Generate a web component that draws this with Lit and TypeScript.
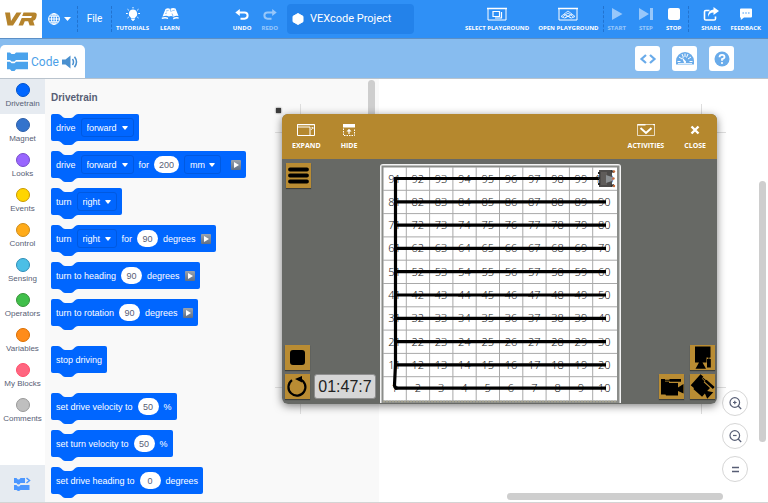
import { LitElement, html, svg, css } from "lit";
import { customElement } from "lit/decorators.js";

type Part =
  | { kind: "text"; value: string }
  | { kind: "menu"; value: string; label: string }
  | { kind: "num"; value: string; label: string }
  | { kind: "play" };

const t = (value: string): Part => ({ kind: "text", value });
const m = (value: string, label: string): Part => ({ kind: "menu", value, label });
const n = (value: string, label: string): Part => ({ kind: "num", value, label });
const play: Part = { kind: "play" };

const groups: Part[][][] = [
  [
    [t("drive"), m("forward", "Direction")],
    [t("drive"), m("forward", "Direction"), t("for"), n("200", "Distance"), m("mm", "Unit"), play],
    [t("turn"), m("right", "Turn direction")],
    [t("turn"), m("right", "Turn direction"), t("for"), n("90", "Angle"), t("degrees"), play],
    [t("turn to heading"), n("90", "Heading"), t("degrees"), play],
    [t("turn to rotation"), n("90", "Rotation"), t("degrees"), play],
  ],
  [[t("stop driving")]],
  [
    [t("set drive velocity to"), n("50", "Drive velocity"), t("%")],
    [t("set turn velocity to"), n("50", "Turn velocity"), t("%")],
    [t("set drive heading to"), n("0", "Drive heading"), t("degrees")],
  ],
];

const categories = [
  ["Drivetrain", "#0066ff", "#0052cc"],
  ["Magnet", "#3373cc", "#2e5fa8"],
  ["Looks", "#9966ff", "#774dcb"],
  ["Events", "#ffd500", "#cc9900"],
  ["Control", "#ffab19", "#cf8b17"],
  ["Sensing", "#4cbfe6", "#2e8eb8"],
  ["Operators", "#40bf4a", "#389438"],
  ["Variables", "#ff8c1a", "#db6e00"],
  ["My Blocks", "#ff6680", "#ff4d6a"],
  ["Comments", "#bfbfbf", "#999999"],
];

const icons = {
  bulb: html`<svg viewBox="0 0 16 14" width="16" height="14"><g fill="#fff"><path d="M8 2.500a4.300 4.300 0 0 0-2.200 7.900V11h4.400v-.6A4.300 4.300 0 0 0 8 2.500zM6 11.500h4v1.200H6zM7 12.800h2v1H7z"/></g><path d="M8 0v1.400M2.500 2.200l1.300 1.100M13.500 2.200l-1.300 1.100M1 6.500h1.800M15 6.500h-1.800M2.500 11l1.200-.9M13.500 11l-1.200-.9" stroke="#fff" stroke-width="1" fill="none"/></svg>`,
  learn: html`<svg viewBox="0 0 18 14" width="18" height="14"><path d="M4.500 2q2.500-1.300 4.700 0 2.300-1.500 5.300-.5L17.500 9q-2.500-1-5 .8-2.200-1.600-4.700-.3Q5.500 8 1.500 9.500z" fill="#fff"/><path d="M9.200 2l1 3M11 6.500l1 2.500" stroke="#2f8ff5" stroke-width=".6"/><path d="M.8 10.500q3.500-1.200 6 0l.4 1.500q-3-1-6.400 0zM12 11q2.500-1.600 5.600-.7v1.500q-2.600-.8-5.200.6z" fill="#fff"/><path d="M5 4l2.600-.6M11.200 3.700l2.600-.5M4 6.500l2-.5" stroke="#2f8ff5" stroke-width=".5"/></svg>`,
  undo: html`<svg viewBox="0 0 14 12" width="14" height="12"><path d="M3.500 3.500h6a3 3 0 0 1 0 6.200H5.500" fill="none" stroke="#fff" stroke-width="2"/><path d="M4.800 0v7L.3 3.500z" fill="#fff"/></svg>`,
  redo: html`<svg viewBox="0 0 14 12" width="14" height="12"><path d="M10.500 3.500h-6a3 3 0 0 0 0 6.200H8.500" fill="none" stroke="#fff" stroke-width="2"/><path d="M9.200 0v7l4.500-3.500z" fill="#fff"/></svg>`,
  select: html`<svg viewBox="0 0 20 14" width="20" height="14" fill="none" stroke="#fff"><path d="M1 1.500h18v11.500H1z"/><path d="M0 1.500h20" stroke-width="1.500"/><path d="M6 4.500h6.500v5H6z" stroke-width="1.200"/><path d="M14.500 5v6H8" stroke-width="1.200"/></svg>`,
  open: html`<svg viewBox="0 0 20 14" width="20" height="14" fill="none" stroke="#fff"><path d="M1 1.500h18v11.500H1z"/><path d="M0 1.500h20" stroke-width="1.500"/><path d="M3 9.500L10 4l7 5.500-3.500 1.500L10 9 6.500 11zM6 7l7 4M14 7l-7 4M4.500 10l5.500-4 5.500 4" stroke-width=".8"/></svg>`,
  start: html`<svg viewBox="0 0 12 14" width="12" height="14"><path d="M1 1l10.500 6L1 13z" fill="#fff"/></svg>`,
  step: html`<svg viewBox="0 0 16 14" width="16" height="14"><path d="M1 1l10 6-10 6zM12 1h3v12h-3z" fill="#fff"/></svg>`,
  stop: html`<svg viewBox="0 0 14 14" width="14" height="14"><rect x="1" y="1" width="12" height="12" rx="2" fill="#fff"/></svg>`,
  share: html`<svg viewBox="0 0 16 14" width="16" height="14"><path d="M6.500 3.500H2.800a1.300 1.300 0 0 0-1.300 1.300v6.900a1.300 1.300 0 0 0 1.300 1.300h8.400a1.300 1.300 0 0 0 1.300-1.300V9.500" fill="none" stroke="#fff" stroke-width="1.600"/><path d="M10.500 0L16 4l-5.500 4V5.600Q6.500 5.600 5 10 4.500 3 10.500 2.500z" fill="#fff"/></svg>`,
  feedback: html`<svg viewBox="0 0 14 14" width="14" height="14"><path d="M1 2.500a1 1 0 0 1 1-1h10a1 1 0 0 1 1 1v7a1 1 0 0 1-1 1H5l-3.200 2.500V10.500H1z" fill="#fff"/><path d="M3.500 6h1.400M6.300 6h1.400M9.100 6h1.400" stroke="#2f8ff5" stroke-width="1.200"/></svg>`,
};

const glyph = {
  expand: html`<svg viewBox="0 0 18 12" width="18" height="12" fill="none" stroke="#fff"><path d="M.5.5h17v11H.5z"/><path d="M.5 3h12.500v8.500" /><path d="M.5.5h17" stroke-width="1.500"/><path d="M14 6l2-2.500M14.500 3.500h1.500V5" stroke-width=".8"/></svg>`,
  hide: html`<svg viewBox="0 0 14 12" width="14" height="12"><path d="M1 0h12v3.500H1z" fill="#fff"/><path d="M1.500 4.500v7h11v-7" fill="none" stroke="#fff" stroke-dasharray="1.500 1"/><path d="M7 4.800l2.500 2.700H7.600V10H6.400V7.500H4.500z" fill="#fff"/></svg>`,
  activities: html`<svg viewBox="0 0 18 12" width="18" height="12" fill="none" stroke="#fff"><path d="M.5.5h17v11H.5z" stroke-width=".7"/><path d="M.5.7h8M16 .5h2" stroke-width="1.400"/><path d="M3.500 4l5.500 5 5.500-5" stroke-width="2"/></svg>`,
  close: html`<svg viewBox="0 0 12 12" width="12" height="12"><path d="M2.500 2.500l7 7M9.500 2.500l-7 7" stroke="#fff" stroke-width="2.400"/></svg>`,
};

const sideCamera = svg`<path d="M2 5h4v2.500h4V9h9v4.500l5.500-3.500v9.500L19 17v4.500H7l-.5-1H2z"></path><path d="M10.500 5H22v2.800H10.500zM6 5.800h5v1H6z"></path>`;
const topCamera = svg`<path d="M5 1.500h15.500v11h-4v5h-4l3.500 6.200H5.500L9 17.500H5z"></path><path d="M17 14h3.800v8.500H17zM18.400 11.500h1V15h-1z"></path>`;

const CELL = 23.3;

function board() {
  const ks = Array.from({ length: 11 }, (_, i) => i);
  const rows = ks.slice(0, 10);
  return html`<svg class="board" viewBox="0 0 241 239" width="241" height="239" role="img" aria-label="Number grid playground">
    <rect x="0" y="0" width="241" height="250" rx="3" fill="#f4f4f4"></rect>
    <rect x="1.500" y="1.500" width="238" height="250" fill="#8b8d8a"></rect>
    <rect x="3.500" y="3.500" width="233.500" height="233" fill="#fff"></rect>
    <path d="M3 237.500H237" stroke="#a5a28f" stroke-width="1.500" stroke-dasharray="2 1"></path>
    ${ks.slice(1, 10).map(
      (k) => svg`<path d="M${3 + k * CELL} 3V237M3 ${3 + k * CELL}H237" stroke="#a9a9a9" stroke-width="1"></path>`
    )}
    <g class="cells">
      ${rows.map((r) =>
        rows.map(
          (c) => svg`<text x=${14.5 + c * CELL} y=${18.5 + r * CELL} text-anchor="middle">${(9 - r) * 10 + c + 1}</text>`
        )
      )}
    </g>
    <g stroke="#000" stroke-width="3.200" fill="none" stroke-linejoin="round">
      ${rows.map((r) => svg`<path d="M15 ${14.5 + r * CELL}H226"></path>`)}
      <path d="M15.500 13V200L14.500 221q0 3 3 3.200"></path>
    </g>
    <g>
      <rect x="219" y="6" width="13" height="17" fill="#4d4b4a"></rect>
      <rect x="221" y="8" width="6" height="13" fill="#5f5c5a"></rect>
      <path d="M226 11l6 2v4l-6 2z" fill="#8d9194"></path>
      <path d="M219 8v2M219 13v2M219 19v2" stroke="#222" stroke-width="2"></path>
      <path d="M231 7l3 1M231 22l3-1" stroke="#333" stroke-width="2"></path>
      <circle cx="234" cy="7.500" r="1.200" fill="#c46a3a"></circle>
      <circle cx="233.500" cy="14.500" r="1.200" fill="#c46a3a"></circle>
      <circle cx="234" cy="22" r="1.200" fill="#c46a3a"></circle>
    </g>
  </svg>`;
}

@customElement("code-block")
class CodeBlock extends LitElement {
  static properties = { parts: { attribute: false } };
  declare parts: Part[];

  static styles = css`
    :host { display: block; height: 27px; }
    .block {
      position: relative;
      display: inline-flex;
      align-items: center;
      gap: 5px;
      height: 27px;
      padding: 0 5px;
      box-sizing: border-box;
      border-radius: 2px;
      background: #0066ff;
      color: #fff;
      font: 500 9px/12px "Liberation Sans", Arial, sans-serif;
      white-space: pre;
    }
    .notch, .bump { position: absolute; left: 7px; }
    .notch { top: 0; fill: #f9f9f9; }
    .bump { top: 100%; fill: #0066ff; }
    .menu { position: relative; display: flex; align-items: center; }
    select {
      appearance: none;
      height: 19px;
      margin: 0;
      padding: 0 15px 0 5px;
      border: 1px solid #0059e0;
      border-radius: 3px;
      background: transparent;
      color: #fff;
      font: inherit;
    }
    .caret { position: absolute; right: 6px; pointer-events: none; }
    input {
      field-sizing: content;
      min-width: 21px;
      height: 17px;
      box-sizing: border-box;
      margin: 0;
      padding: 0 5px;
      border: 0;
      border-radius: 9px;
      background: #fff;
      color: #575e75;
      font: inherit;
      text-align: center;
    }
    .play {
      display: flex;
      width: 10px;
      height: 10px;
      padding: 0;
      border: 0;
      border-radius: 1px;
      background: linear-gradient(#9ba3ad, #5f6f86);
    }
    .menu + .play { margin-left: 5px; }
  `;

  render() {
    return html`<div class="block">
      <svg class="notch" viewBox="0 0 20 4" width="20" height="4"><path d="M0 0Q2 0 3.500 1.800L5 3.200Q6 4 7 4h6q1 0 2-.8l1.500-1.400Q18 0 20 0z" /></svg>
      ${this.parts.map((p) => {
        if (p.kind === "text") return html`<span>${p.value}</span>`;
        if (p.kind === "num") return html`<input type="text" aria-label=${p.label} .value=${p.value} />`;
        if (p.kind === "menu")
          return html`<span class="menu"
            ><select aria-label=${p.label}><option>${p.value}</option></select
            ><svg class="caret" viewBox="0 0 6 4" width="6" height="4"><path d="M.5 0h5q.5.3 0 1L3.500 3.500q-.5.5-1 0L.5 1Q0 .3.500 0z" fill="#fff" /></svg></span>`;
        return html`<button class="play" aria-label="Show more"><svg viewBox="0 0 10 10" width="10" height="10"><path d="M3 2l5 3-5 3z" fill="#fff" /></svg></button>`;
      })}
      <svg class="bump" viewBox="0 0 20 4" width="20" height="4"><path d="M0 0Q2 0 3.500 1.800L5 3.200Q6 4 7 4h6q1 0 2-.8l1.500-1.400Q18 0 20 0z" /></svg>
    </div>`;
  }
}

@customElement("app-root")
class AppRoot extends LitElement {
  static styles = css`
    :host {
      display: flex;
      flex-direction: column;
      position: relative;
      height: 100vh;
      overflow: hidden;
      box-sizing: border-box;
      border-bottom: 1px solid #d4d4d4;
      background: #fff;
      font-family: "Liberation Sans", Arial, sans-serif;
    }
    svg { display: block; flex: none; }
    button { margin: 0; padding: 0; border: 0; background: none; color: inherit; font: inherit; }

    .top {
      display: flex;
      align-items: stretch;
      flex: none;
      height: 38px;
      border-bottom: 1px solid #5b8fc6;
      background: #2f90f6;
      color: #fff;
    }
    .logo { display: flex; align-items: center; justify-content: center; width: 42px; background: #fff; }
    .lang { display: flex; align-items: center; gap: 4px; padding-left: 6px; width: 35px; box-sizing: border-box; }
    .file { width: 33px; font: 10px/14px Roboto, sans-serif; }
    .sep { flex: none; width: 0; margin: 6px 0; border-left: 1px dashed #2273d0; }
    .tools { display: flex; gap: 11px; padding-left: 4px; }
    .history { display: flex; gap: 10px; padding: 0 9px 0 53px; }
    .tool {
      display: flex;
      flex-direction: column;
      align-items: center;
      justify-content: flex-end;
      gap: 3px;
      padding-bottom: 6px;
      font: 700 6px/8px "Open Sans", sans-serif;
      white-space: nowrap;
    }
    .tool svg { margin: auto 0 0; }
    .off { opacity: 0.5; }
    .project {
      display: flex;
      align-items: center;
      gap: 6px;
      width: 127px;
      height: 30px;
      box-sizing: border-box;
      margin-top: 4px;
      padding: 0 5px;
      border-radius: 4px;
      background: #2382ea;
    }
    .project input {
      flex: 1;
      min-width: 0;
      padding: 0;
      border: 0;
      background: none;
      color: #fff;
      font: 11px/16px Roboto, sans-serif;
    }
    .right { display: flex; margin-left: auto; padding-right: 7px; }
    .right > div { display: flex; }
    .grounds { gap: 9px; padding-right: 4px; }
    .run { gap: 12px; padding: 0 7px 0 4px; }
    .social { gap: 10px; padding-left: 12px; }

    .bar {
      display: flex;
      align-items: flex-end;
      flex: none;
      height: 39px;
      border-bottom: 1px solid #b9c3cd;
      background: #87bcef;
    }
    .tab {
      display: flex;
      align-items: center;
      gap: 3px;
      width: 85px;
      height: 33px;
      box-sizing: border-box;
      padding-left: 7px;
      border-radius: 5px 5px 0 0;
      background: #fff;
      color: #4c9fe8;
      font: 12px/16px Roboto, sans-serif;
    }
    .views { display: flex; gap: 12px; margin: 0 34px 7px auto; }
    .view { display: flex; align-items: center; justify-content: center; width: 25px; height: 25px; border-radius: 3px; background: #fff; }

    .main { display: flex; flex: 1; min-height: 0; }
    .side { display: flex; flex-direction: column; flex: none; width: 45px; background: #fff; }
    .cats { flex: 1; margin: 0; padding: 0; list-style: none; }
    .cat {
      display: flex;
      flex-direction: column;
      align-items: center;
      gap: 1px;
      width: 45px;
      height: 35px;
      padding-top: 4px;
      color: #575e75;
      font: 8px/12px "Liberation Sans", Arial, sans-serif;
      white-space: nowrap;
    }
    .cat.on { background: #e6ebf1; }
    .dot { flex: none; width: 14px; height: 14px; box-sizing: border-box; border: 1px solid; border-radius: 50%; }
    .ext { display: flex; align-items: center; justify-content: center; height: 37px; background: #e6ebf1; }

    .flyout { position: relative; flex: none; width: 334px; box-sizing: border-box; padding: 12px 0 0 6px; overflow: hidden; background: #f9f9f9; }
    .flyout h2 { margin: 0 0 9px; color: #575e75; font: 700 10px/14px "Liberation Sans", Arial, sans-serif; }
    .stack { display: flex; flex-direction: column; gap: 10px; margin-bottom: 20px; }
    .thumb { position: absolute; border-radius: 4px; background: #cecece; }
    .thumb.fly { top: 1px; right: 4px; width: 7px; height: 60%; }
    .space { position: relative; flex: 1; background: #fff; }
    .thumb.vert { top: 102px; right: 2px; bottom: 60px; width: 7px; }
    .thumb.horiz { right: 45px; bottom: 2px; left: 128px; height: 7px; }
    .zoom { position: absolute; right: 20px; bottom: 20px; display: flex; flex-direction: column; gap: 7px; }
    .zoom button { display: flex; align-items: center; justify-content: center; width: 26px; height: 26px; box-sizing: border-box; border: 1px solid #d6d6d6; border-radius: 50%; background: #fff; }

    .frame { position: absolute; top: 114px; right: 51px; bottom: 98px; left: 282px; }
    .edge { position: absolute; background: #dedede; }
    .edge.h { right: -9px; left: -7px; height: 1px; }
    .edge.v { top: -10px; bottom: -10px; width: 1px; }
    .edge.t { top: 18px; }
    .edge.b { bottom: 16px; }
    .edge.l { left: 18px; }
    .edge.r { right: 15px; }
    .grip { position: absolute; top: -6px; left: -6px; width: 5px; height: 5px; background: #3c3c3c; box-shadow: 0 0 2px #3c3c3c; }
    .window {
      position: relative;
      display: flex;
      flex-direction: column;
      height: 100%;
      overflow: hidden;
      border-radius: 6px;
      background: #676965;
    }
    .shade { position: absolute; inset: 0; border-radius: 6px; box-shadow: 0 2px 8px #00000080; }
    .title { display: flex; align-items: center; flex: none; height: 45px; box-sizing: border-box; padding: 2px 11px 0 10px; background: #b5882e; color: #fff; }
    .act { display: flex; flex-direction: column; align-items: center; gap: 5px; font: 700 7px/10px "Open Sans", sans-serif; }
    .group { display: flex; gap: 20px; }
    .group:last-child { margin-left: auto; }
    .stage { position: relative; display: flex; justify-content: center; flex: 1; min-height: 0; padding: 5px 0 0 2px; }
    .cells { font: 300 11px "Noto Sans", sans-serif; fill: #222; }
    .corner { position: absolute; display: flex; flex-direction: column; gap: 4px; }
    .corner.tl { top: 4px; left: 4px; }
    .corner.bl { bottom: 5px; left: 3px; }
    .corner.br { right: 2px; bottom: 5px; align-items: flex-end; }
    .row { display: flex; align-items: center; gap: 4px; }
    .br .row { gap: 6px; }
    .sq { display: flex; width: 25px; height: 25px; background: #b98c33; box-shadow: 0 1px 1px #00000066; }
    .timer {
      display: flex;
      align-items: center;
      justify-content: center;
      width: 60px;
      height: 23px;
      border: 1px solid #8e8e8e;
      border-radius: 3px;
      background: #d6d6d6;
      color: #222;
      font: 16px/20px "Liberation Sans", Arial, sans-serif;
    }
  `;

  private tool(label: string, icon: unknown, off = false) {
    return html`<button class="tool ${off ? "off" : ""}" ?disabled=${off}>${icon}<span>${label}</span></button>`;
  }

  private act(label: string, icon: unknown) {
    return html`<button class="act">${icon}<span>${label}</span></button>`;
  }

  private camera(shape: unknown, transform = "") {
    return html`<svg viewBox="0 0 25 25" width="25" height="25"><g transform=${transform}>${shape}</g></svg>`;
  }

  render() {
    return html`
      <header class="top">
        <div class="logo">
          <svg viewBox="0 0 34 14" width="34" height="14" role="img" aria-label="VR"><path d="M1 .5h5l1 8.500L12.500.5H17.500L9 13.500H3.500zM19.500.5h10.500q3.500 0 2.600 3.500l-.5 2q-.8 2.500-3 2.700l1.500 4.800h-5L24.200 9.300h-3.400L19 13.500h-4.500L17.700 6h9.500l.7-2H18.200z" fill="#b5832c" /></svg>
        </div>
        <button class="lang" aria-label="Language">
          <svg viewBox="0 0 12 12" width="12" height="12" fill="none" stroke="#fff"><circle cx="6" cy="6" r="5.400" /><ellipse cx="6" cy="6" rx="2.500" ry="5.400" /><path d="M6 .5v11M.5 6h11M1.500 3.200h9M1.500 8.800h9" /></svg>
          <svg viewBox="0 0 7 4" width="7" height="4"><path d="M0 0h7L3.500 4z" fill="#fff" /></svg>
        </button>
        <span class="sep"></span>
        <button class="file">File</button>
        <span class="sep"></span>
        <div class="tools">${this.tool("TUTORIALS", icons.bulb)}${this.tool("LEARN", icons.learn)}</div>
        <div class="history">${this.tool("UNDO", icons.undo)}${this.tool("REDO", icons.redo, true)}</div>
        <label class="project">
          <svg viewBox="0 0 12 12" width="12" height="12"><path d="M6 .5L11 3.300v5.400L6 11.500 1 8.700V3.300z" fill="#fff" stroke="#fff" stroke-linejoin="round" /></svg>
          <input type="text" aria-label="Project name" .value=${"VEXcode Project"} />
        </label>
        <div class="right">
          <div class="grounds">${this.tool("SELECT PLAYGROUND", icons.select)}${this.tool("OPEN PLAYGROUND", icons.open)}</div>
          <span class="sep"></span>
          <div class="run">${this.tool("START", icons.start, true)}${this.tool("STEP", icons.step, true)}${this.tool("STOP", icons.stop)}</div>
          <span class="sep"></span>
          <div class="social">${this.tool("SHARE", icons.share)}${this.tool("FEEDBACK", icons.feedback)}</div>
        </div>
      </header>

      <div class="bar">
        <button class="tab">
          <svg viewBox="0 0 21 19" width="21" height="19" fill="#4ba3ec"><path d="M0 .5h3L4.500 2h3L9 .5h12V8H9L7.500 9.500h-3L3 8H0zM0 9.800h3l1.500 1.500h3L9 9.800h12v7.500H9L7.500 19h-3L3 17.300H0z" /></svg>
          <span>Code</span>
          <svg viewBox="0 0 16 14" width="16" height="14"><path d="M0 4.500h3.500L8.500.5v13L3.500 9.500H0z" fill="#4a90cf" /><path d="M10.500 4q2 3 0 6M12.500 1.800q4 5.200 0 10.400" fill="none" stroke="#4a90cf" stroke-width="1.500" /></svg>
        </button>
        <div class="views">
          <button class="view" aria-label="Code viewer"><svg viewBox="0 0 18 12" width="18" height="12"><path d="M7 2L2.500 6 7 10M11 2l4.500 4L11 10" fill="none" stroke="#69abea" stroke-width="2.200" /></svg></button>
          <button class="view" aria-label="Monitor"><svg viewBox="0 0 18 13" width="18" height="13"><path d="M0 12.500V9a9 9 0 0 1 18 0v3.500z" fill="#69abea" /><path d="M1.500 9.500h3M13.500 9.500h3M3 5l3 2M15 5l-3 2M6 2l1.500 3.500M12 2l-1.500 3.500M9 1.500V5" stroke="#fff" /><path d="M5.500 4.500L10 9.500q.5 1.500-1 1.500-1.500 0-1.200-1z" fill="#fff" /><path d="M2 11.500h14" stroke="#fff" stroke-width=".8" /></svg></button>
          <button class="view" aria-label="Help"><svg viewBox="0 0 16 16" width="16" height="16"><circle cx="8" cy="8" r="7.500" fill="#69abea" /><path d="M5.500 6.300q0-2.500 2.500-2.500t2.500 2.300Q10.500 7.500 8 8.200v1.600" fill="none" stroke="#fff" stroke-width="1.800" /><circle cx="8" cy="12" r="1.100" fill="#fff" /></svg></button>
        </div>
      </div>

      <div class="main">
        <nav class="side">
          <ul class="cats">
            ${categories.map(
              ([name, fill, edge], i) => html`<li>
                <button class="cat ${i === 0 ? "on" : ""}"><span class="dot" style="background:${fill};border-color:${edge}"></span><span>${name}</span></button>
              </li>`
            )}
          </ul>
          <button class="ext" aria-label="Add extension">
            <svg viewBox="0 0 17 14" width="17" height="14"><path d="M0 1h2.500q1 1.500 2 1.500T6.500 1H11v5H6.500Q5.500 7.500 4.500 7.500T2.500 6H0zM0 8h2.500q1 1.500 2 1.500T6.500 8H15.500v5H6.500Q5.500 14 4.500 14T2.500 13H0z" fill="#4c97ff" /><path d="M12.500 1l3 2.500-3 2.500" fill="none" stroke="#4c97ff" stroke-width="1.500" /></svg>
          </button>
        </nav>
        <section class="flyout">
          <h2>Drivetrain</h2>
          ${groups.map((g) => html`<div class="stack">${g.map((b) => html`<code-block .parts=${b}></code-block>`)}</div>`)}
          <div class="thumb fly"></div>
        </section>
        <section class="space">
          <div class="thumb vert"></div>
          <div class="thumb horiz"></div>
          <div class="zoom">
            ${[
              ["Zoom in", "M4 5.500h3.600M5.800 3.700v3.600"],
              ["Zoom out", "M4 5.500h3.600"],
              ["Reset zoom", ""],
            ].map(
              ([label, d]) => html`<button aria-label=${label}>
                <svg viewBox="0 0 13 13" width="13" height="13" fill="none" stroke="#575e75" stroke-width="1.200">
                  ${d
                    ? svg`<circle cx="5.800" cy="5.500" r="4.800"></circle><path d="M9.200 9l3 3"></path><path d=${d}></path>`
                    : svg`<path d="M3 4.500h7M3 8.500h7" stroke-width="1.400"></path>`}
                </svg>
              </button>`
            )}
          </div>
        </section>
      </div>

      <div class="frame">
        <div class="edge h t"></div>
        <div class="edge h b"></div>
        <div class="edge v l"></div>
        <div class="edge v r"></div>
        <div class="grip"></div>
        <div class="shade"></div>
        <section class="window" aria-label="Playground">
          <div class="title">
            <div class="group">${this.act("EXPAND", glyph.expand)}${this.act("HIDE", glyph.hide)}</div>
            <div class="group">${this.act("ACTIVITIES", glyph.activities)}${this.act("CLOSE", glyph.close)}</div>
          </div>
          <div class="stage">
            ${board()}
            <div class="corner tl">
              <button class="sq" aria-label="Menu"><svg viewBox="0 0 25 25" width="25" height="25"><path d="M4 6.500h17M4 12.500h17M4 18.500h17" stroke="#000" stroke-width="3.800" stroke-linecap="round" /></svg></button>
            </div>
            <div class="corner bl">
              <button class="sq" aria-label="Stop"><svg viewBox="0 0 25 25" width="25" height="25"><rect x="5" y="5" width="15" height="15" rx="3" /></svg></button>
              <div class="row">
                <button class="sq" aria-label="Reset"><svg viewBox="0 0 25 25" width="25" height="25"><path d="M7 6.200A8.500 8.500 0 1 0 15 5.200" fill="none" stroke="#000" stroke-width="2.200" /><path d="M10 5l7-3v6.500z" /></svg></button>
                <output class="timer">01:47:7</output>
              </div>
            </div>
            <div class="corner br">
              <button class="sq" aria-label="Top camera">${this.camera(topCamera)}</button>
              <div class="row">
                <button class="sq" aria-label="Chase camera">${this.camera(sideCamera)}</button>
                <button class="sq" aria-label="Angle camera">${this.camera(sideCamera, "rotate(42 12.5 12.5) translate(1 0) scale(0.95)")}</button>
              </div>
            </div>
          </div>
        </section>
      </div>
    `;
  }
}
